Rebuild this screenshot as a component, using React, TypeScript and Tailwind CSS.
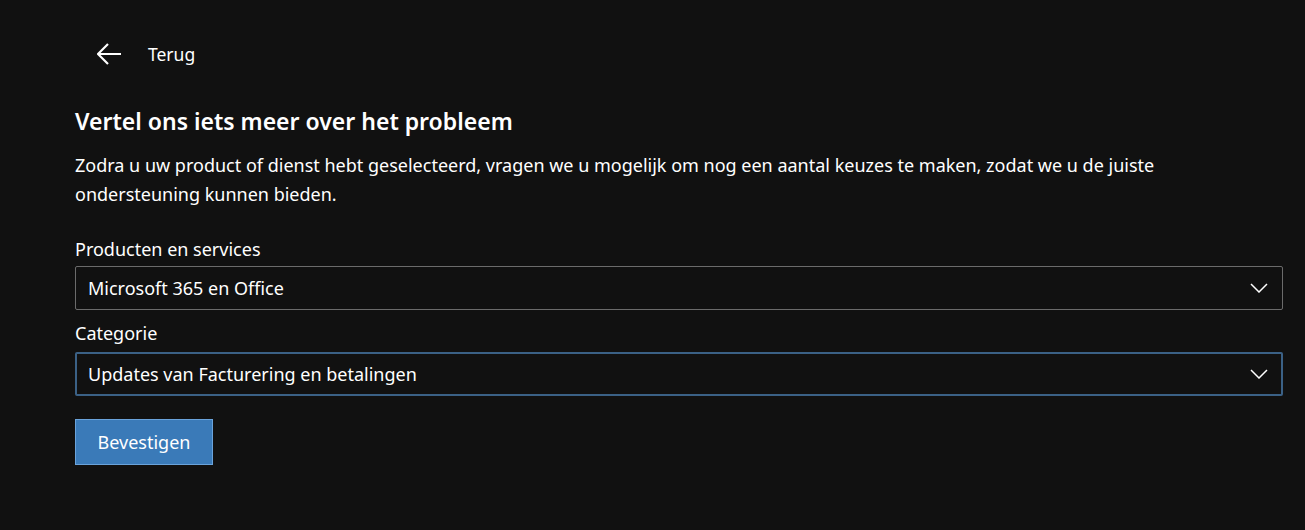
import { useState } from "react";

const PRODUCTS = ["Microsoft 365 en Office", "Windows", "Xbox", "Outlook.com"] as const;
const CATEGORIES = [
  "Updates van Facturering en betalingen",
  "Installeren en activeren",
  "Account en abonnement",
] as const;

function Chevron() {
  return (
    <svg width="18" height="10" viewBox="0 0 18 10" className="text-white">
      <path d="M1 1l8 8 8-8" fill="none" stroke="currentColor" strokeWidth="1.5" />
    </svg>
  );
}

function Dropdown({
  value,
  options,
  focused,
  onChange,
}: {
  value: string;
  options: readonly string[];
  focused?: boolean;
  onChange: (v: string) => void;
}) {
  return (
    <div
      className={`relative flex h-[44px] w-full items-center rounded-[2px] ${
        focused ? "border-2 border-[#3b6186] pl-[11px] pr-[13px]" : "border border-[#6b6b6b] pl-3 pr-[14px]"
      }`}
    >
      <span className="flex-1 text-[18px] text-white">{value}</span>
      <Chevron />
      <select
        className="absolute inset-0 cursor-pointer opacity-0"
        value={value}
        onChange={(e) => onChange(e.target.value)}
      >
        {options.map((o) => (
          <option key={o} value={o}>
            {o}
          </option>
        ))}
      </select>
    </div>
  );
}

export default function App() {
  const [product, setProduct] = useState<string>(PRODUCTS[0]);
  const [category, setCategory] = useState<string>(CATEGORIES[0]);

  return (
    <div className="min-h-[530px] bg-[#111111] font-['Noto_Sans','Open_Sans',sans-serif] text-white">
      <div className="pl-[75px] pr-[22px] pt-[41px]">
        {/* back link */}
        <button className="flex items-center gap-[27px] pl-[22px] text-[17.5px]">
          <svg width="24" height="22" viewBox="0 0 24 22">
            <path d="M11 1L1 11l10 10M1 11h23" fill="none" stroke="white" strokeWidth="2.2" />
          </svg>
          <span>Terug</span>
        </button>

        <h2 className="mt-[39px] text-[23px] font-semibold leading-[30px]">
          Vertel ons iets meer over het probleem
        </h2>
        <p className="mt-[15px] max-w-[1120px] text-[18px] leading-[29px]">
          Zodra u uw product of dienst hebt geselecteerd, vragen we u mogelijk om nog een aantal keuzes te maken,
          zodat we u de juiste ondersteuning kunnen bieden.
        </p>

        <div className="mt-[28px]">
          <label className="block text-[18px] leading-[24px]">Producten en services</label>
          <div className="mt-[5px]">
            <Dropdown value={product} options={PRODUCTS} onChange={setProduct} />
          </div>
        </div>

        <div className="mt-[11px]">
          <label className="block text-[18px] leading-[24px]">Categorie</label>
          <div className="mt-[7px]">
            <Dropdown value={category} options={CATEGORIES} onChange={setCategory} focused />
          </div>
        </div>

        <button className="mt-[23px] h-[46px] w-[138px] border border-[#6aa3db] bg-[#3a7ab8] text-[18px] text-white">
          Bevestigen
        </button>
      </div>
    </div>
  );
}
